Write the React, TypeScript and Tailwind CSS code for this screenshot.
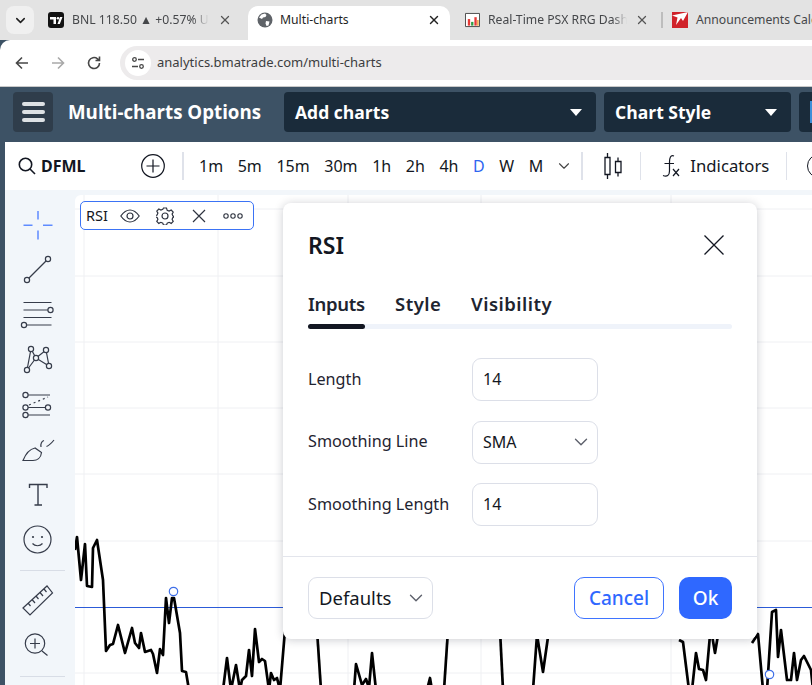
import { ChevronDown, X } from 'lucide-react';

const uiFont = "font-['Noto_Sans',sans-serif]";

const intervals = ['1m', '5m', '15m', '30m', '1h', '2h', '4h', 'D', 'W', 'M'];

// chart pieces that stay visible around the dialog, in page coordinates
const rsiLines = [
  '75,550 77,537 81,580 85,544 87,586 92,587 93,548 97,540 103,580 106,651 110,645 113,644 118,625 125,653 132,628 135,643 139,648 141,633 145,652 151,650 153,654 157,673 160,649 163,655 166,598 169,623 172,598 174,598 180,633 182,671 186,672 189,690',
  '223,690 227,658 231,690 236,665 240,690 242,680 246,676 249,650 252,676 255,629 259,662 262,659 265,661 269,690 271,673 274,680 277,678 280,690 285,630',
  '317,630 321,690',
  '354,690 356,664 362,685 366,679 369,688 372,653 376,690',
  '427,690 430,678 432,690',
  '444,690 448,630',
  '500,630 503,690',
  '533,690 537,635 543,672 549,630',
  '679,640 683,642 689,690',
  '692,690 696,653 699,669 703,670 706,680 710,635',
  '712,635 715,653 718,635',
  '752,643 758,634 763,690',
  '767,690 772,612 776,610 778,657 781,630 787,680 791,680 794,653 797,680 801,660 804,656 811,670 813,690',
];

const gridX = [84, 218, 348, 481, 671];
const gridY = [209, 276, 342, 408, 474, 541, 673];

const ink = 'fill-none stroke-[#363c4a] stroke-[1.2]';

const Dot = ({ x, y }: { x: number; y: number }) => (
  <circle cx={x} cy={y} r="2.6" className="fill-[#f2f6fa] stroke-[#363c4a] stroke-[1.2]" />
);

const Tool = ({ y, children }: { y: number; children: React.ReactNode }) => (
  <svg viewBox={`16 ${y} 44 45`} className="w-[44px] h-[45px] shrink-0">
    {children}
  </svg>
);

const Sidebar = () => (
  <div className="w-[70px] shrink-0 bg-[#f2f6fa] pl-[11px] pt-[13px] flex flex-col">
    <Tool y={203}>
      <path d="M38 211v8.500M38 230.500v9M23.500 225.200h9M43 225.200h9.500" className="fill-none stroke-[#5f8bff] stroke-[1.5]" />
    </Tool>
    <Tool y={248}>
      <path d="M27 280 48 259" className={ink} />
      <Dot x={27} y={280} />
      <Dot x={48} y={259} />
    </Tool>
    <Tool y={293}>
      <path d="M23.500 302.500h28M23.500 310h25M23.500 317.500h28M27 325h24.500" className={ink} />
      <Dot x={50.500} y={310} />
      <Dot x={24} y={325} />
    </Tool>
    <Tool y={338}>
      <path d="M27 370 31 349 36 358 46 350 49 366 36 358 27 370" className={ink} />
      <Dot x={31} y={349} />
      <Dot x={46} y={350} />
      <Dot x={27} y={370} />
      <Dot x={49} y={366} />
      <Dot x={36} y={358} />
    </Tool>
    <Tool y={383}>
      <path d="M28 395h22M28 407.500h18M28 415h22" className={ink} />
      <path d="M29 405 48 397" className={`${ink} [stroke-dasharray:2_3]`} />
      <Dot x={25.500} y={395} />
      <Dot x={25.500} y={407.500} />
      <Dot x={48} y={407.500} />
      <Dot x={25.500} y={415} />
    </Tool>
    <Tool y={428}>
      <path d="M23 460.500C26 453 30 449 35 448L41.500 452.500C41 458 37 460.500 33 460.500Z" className={ink} />
      <path d="M41 447C40.500 444 41.500 441.500 44 440.500M46.500 446.500C49 445.500 52 442.500 54 440" className={ink} />
    </Tool>
    <Tool y={473}>
      <path d="M29.500 488v-3.500h17.500v3.500M38 484.500v20M34.500 505h7.500" className="fill-none stroke-[#363c4a] stroke-[1.4]" />
    </Tool>
    <Tool y={518}>
      <circle cx="37.500" cy="539.500" r="13.500" className={ink} />
      <circle cx="33" cy="537" r="1.100" className="fill-[#363c4a]" />
      <circle cx="42" cy="537" r="1.100" className="fill-[#363c4a]" />
      <path d="M32.500 543.500c2.500 3 7.500 3 10 0" className={ink} />
    </Tool>
    <div className="w-[45px] h-px bg-[#d8dde6] ml-[4px] mt-[7px] mb-[6px]" />
    <Tool y={577}>
      <path d="M23 608 47 586 52.500 593 30 615Z M28 603l2.500 3M32 599.500l3 3.500M36 596l2.500 3M40 592.500l3 3.500M44 589l2.500 3" className={ink} />
    </Tool>
    <Tool y={622}>
      <circle cx="35" cy="643.500" r="9.700" className={ink} />
      <path d="M30 643.500h10M35 638.500v10M42 651l5.500 4.500" className={ink} />
    </Tool>
    <div className="w-[45px] h-px bg-[#d8dde6] ml-[4px] mt-[9px]" />
  </div>
);

const ChartLayer = () => (
  <svg viewBox="75 195 737 490" className="absolute inset-0 w-[737px] h-[490px]">
    {gridX.map((x) => (
      <path key={x} d={`M${x} 195V685`} className="stroke-[#eff0f3] stroke-1" />
    ))}
    {gridY.map((y) => (
      <path key={y} d={`M75 ${y}H812`} className="stroke-[#eff0f3] stroke-1" />
    ))}
    <path d="M75 607.500H812" className="stroke-[#2c5bd8] stroke-1" />
    {rsiLines.map((p) => (
      <polyline key={p} points={p} className="fill-none stroke-black stroke-[2.7] [stroke-linejoin:round]" />
    ))}
    <circle cx="173.500" cy="591.500" r="4.200" className="fill-white stroke-[#3f6fe8] stroke-[1.2]" />
    <circle cx="769.500" cy="674.500" r="4.200" className="fill-white stroke-[#3f6fe8] stroke-[1.2]" />
  </svg>
);

const StudyLegend = () => (
  <div className="absolute left-[5px] top-[6px] w-[174px] h-[29px] bg-white border-[1.5px] border-[#3b73f5] rounded-[5px] flex items-center pl-[5px] text-[14.500px] text-[#131722]">
    <span className="w-[29px]">RSI</span>
    <svg viewBox="0 0 20 14" className="w-[20px] h-[14px] ml-[5px] fill-none stroke-[#2f3440] stroke-[1.2]">
      <path d="M.8 7C4 2.500 7 1 10 1s6 1.500 9.200 6C16 11.500 13 13 10 13S4 11.500.8 7Z" />
      <circle cx="10" cy="7" r="3" />
    </svg>
    <svg viewBox="0 0 18 18" className="w-[18px] h-[18px] ml-[16px] fill-none stroke-[#2f3440] stroke-[1.2]">
      <path d="M7.500 1h3l.7 2.300 1.900.8 2.100-1.100 2 2-1.100 2.100.8 1.900 0 0 2 .7v0l-2 .7-.8 1.900 1.100 2.100-2 2-2.100-1.100-1.900.8-.7 2h-3l-.7-2-1.900-.8-2.100 1.100-2-2 1.100-2.100-.8-1.900-2-.7v-1l2-.7.8-1.900-1.100-2.100 2-2 2.100 1.100 1.900-.8Z" />
      <circle cx="9" cy="9" r="3" />
    </svg>
    <svg viewBox="0 0 14 14" className="w-[14px] h-[14px] ml-[18px] fill-none stroke-[#2f3440] stroke-[1.2]">
      <path d="M1 1l12 12M13 1 1 13" />
    </svg>
    <svg viewBox="0 0 20 6" className="w-[20px] h-[6px] ml-[17px] fill-none stroke-[#2f3440] stroke-[1.1]">
      <circle cx="3" cy="3" r="2.200" />
      <circle cx="10" cy="3" r="2.200" />
      <circle cx="17" cy="3" r="2.200" />
    </svg>
  </div>
);

const Field = ({ label, value, select }: { label: string; value: string; select?: boolean }) => (
  <div className="flex items-center h-[43px]">
    <span className="w-[164px] text-[16.200px] text-[#1f2430] pb-[1px]">{label}</span>
    <div className="w-[126px] h-[43px] border border-[#dcdfe8] rounded-[9px] flex items-center justify-between pl-[10px] pr-[5px] pb-[1px] text-[16px] text-[#131722]">
      {value}
      {select && <ChevronDown size={22} strokeWidth={1.5} className="text-[#5d606b]" />}
    </div>
  </div>
);

const RsiDialog = () => (
  <div className="absolute left-[208px] top-[8px] w-[474px] h-[436px] bg-white rounded-[8px] shadow-[0_1px_10px_rgba(20,25,40,0.22)] flex flex-col text-[#131722]">
    <div className="h-[86px] px-[25px] pb-[2px] flex items-center justify-between">
      <h2 className="text-[23px] font-semibold">RSI</h2>
      <svg viewBox="0 0 20 20" className="w-[20px] h-[20px] mr-[8px] fill-none stroke-[#131722] stroke-[1.3]">
        <path d="M.5.5l19 19M19.500.5l-19 19" />
      </svg>
    </div>
    <div className="h-[35px] px-[25px] flex items-start gap-[30px] text-[18.500px] font-semibold text-[#20242f] leading-[30px]">
      <span className="w-[57px] tracking-[-0.3px]">Inputs</span>
      <span className="w-[46px] tracking-[0.5px]">Style</span>
      <span className="tracking-[0.5px]">Visibility</span>
    </div>
    <div className="mx-[25px] h-[5px] rounded-full bg-[#eff3fa]">
      <div className="w-[57px] h-[5px] rounded-full bg-[#131722]" />
    </div>
    <div className="px-[25px] mt-[29px] flex flex-col gap-[19.500px]">
      <Field label="Length" value="14" />
      <Field label="Smoothing Line" value="SMA" select />
      <Field label="Smoothing Length" value="14" />
    </div>
    <div className="mt-[30px] border-t border-[#e3e5ec] pt-[20px] px-[25px] flex items-center justify-between">
      <div className="w-[125px] h-[42px] border border-[#dcdfe8] rounded-[9px] flex items-center justify-between pl-[10px] pr-[5px] text-[18.500px]">
        Defaults
        <ChevronDown size={22} strokeWidth={1.5} className="text-[#5d606b]" />
      </div>
      <div className="flex gap-[15px] text-[19px] font-medium">
        <button className="w-[90px] h-[42px] border border-[#3f74ff] rounded-[10px] text-[#2f68ff]">Cancel</button>
        <button className="w-[53px] h-[42px] rounded-[10px] bg-[#2f68ff] text-white">Ok</button>
      </div>
    </div>
  </div>
);

const BrowserTabs = () => (
  <div className="h-[40px] bg-[#e3e3e3] flex pl-[6px] pt-[6px] text-[12.200px] text-[#45474a] overflow-hidden">
    <div className="w-[28px] h-[28px] shrink-0 rounded-[8px] bg-[#f0f0f0] flex items-center justify-center text-[#1f1f1f]">
      <ChevronDown size={15} strokeWidth={2.4} />
    </div>
    <div className="w-[214px] h-[28px] shrink-0 flex items-center pl-[14px]">
      <svg viewBox="0 0 16 16" className="w-[16px] h-[16px] shrink-0">
        <rect width="16" height="16" rx="3" className="fill-[#131313]" />
        <path d="M2 5h6v7H5.500V7.500H2Z M9.500 12l2.500-7h2.500l-2.700 7Z" className="fill-white" />
        <circle cx="10" cy="6.300" r="1.300" className="fill-white" />
      </svg>
      <span className="w-[137px] shrink-0 ml-[8px] pt-[1px] whitespace-nowrap [mask-image:linear-gradient(to_right,black_88%,transparent)]">BNL 118.50 ▲ +0.57% Um</span>
      <X size={14} strokeWidth={2.2} className="ml-[9px] shrink-0 text-[#555]" />
    </div>
    <div className="w-[202px] h-[34px] shrink-0 bg-white rounded-t-[10px] flex items-center pl-[9px] pb-[6px] text-[#1f1f1f]">
      <svg viewBox="0 0 16 16" className="w-[16px] h-[16px] shrink-0">
        <circle cx="8" cy="8" r="7.500" className="fill-[#5f6368]" />
        <path d="M4.500 2.500 8 1.500l1.500 1.500-1 2-2.500.5-1 1.500L2 5.500ZM9 9l3.500.5-1 4-2 .5-1-2.500Z" className="fill-white" />
      </svg>
      <span className="ml-[7px] pt-[1px]">Multi-charts</span>
      <X size={14} strokeWidth={2.4} className="ml-auto mr-[9px] text-[#222]" />
    </div>
    <div className="w-[211px] h-[28px] shrink-0 flex items-center pl-[15px]">
      <svg viewBox="0 0 16 16" className="w-[15px] h-[16px] shrink-0">
        <path d="M.5 1h15v14H.5Z" className="fill-white stroke-[#444] stroke-1" />
        <path d="M3 7h2.500v7H3Z" className="fill-[#e53935]" />
        <path d="M6.500 10H9v4H6.500Z" className="fill-[#2e9e44]" />
        <path d="M10 5h2.500v9H10Z" className="fill-[#e53935]" />
        <path d="M13 8h1.500v6H13Z" className="fill-[#f29a2e]" />
      </svg>
      <span className="w-[139px] shrink-0 ml-[8px] pt-[1px] whitespace-nowrap [mask-image:linear-gradient(to_right,black_90%,transparent)]">Real-Time PSX RRG Dashb</span>
      <X size={14} strokeWidth={2.2} className="ml-[8px] shrink-0 text-[#555]" />
    </div>
    <div className="h-[28px] shrink-0 flex items-center">
      <div className="w-[2px] h-[16px] bg-[#bdbdbd] shrink-0" />
      <svg viewBox="0 0 16 16" className="w-[16px] h-[16px] ml-[9px] shrink-0">
        <rect width="16" height="16" className="fill-[#d0222a]" />
        <path d="M0 3.500 16 0l-5 9-2-3-5 7 1.500-7.500Z" className="fill-white" />
      </svg>
      <span className="ml-[8px] pt-[1px] whitespace-nowrap">Announcements Calen</span>
    </div>
  </div>
);

const AddressBar = () => (
  <div className="h-[47px] bg-white border-b border-[#c9c9c9] rounded-tl-[10px] flex items-center pb-[1px] relative">
    <svg viewBox="0 0 16 16" className="w-[16px] h-[16px] ml-[14px] fill-none stroke-[#474747] stroke-[1.6]">
      <path d="M14 8H2.500M8 2.500 2.500 8 8 13.500" />
    </svg>
    <svg viewBox="0 0 16 16" className="w-[16px] h-[16px] ml-[20px] fill-none stroke-[#a9a9a9] stroke-[1.6]">
      <path d="M2 8h11.500M8 2.500 13.500 8 8 13.500" />
    </svg>
    <svg viewBox="0 0 16 16" className="w-[16px] h-[16px] ml-[20px] fill-none stroke-[#474747] stroke-[1.6]">
      <path d="M13.500 8A5.500 5.500 0 1 1 11.500 3.800L13.500 5.500M13.500 1.500v4h-4" />
    </svg>
    <div className="ml-[18px] flex-1 h-[34px] rounded-l-full bg-[#edebec] flex items-center pl-[5px]">
      <div className="w-[26px] h-[26px] rounded-full bg-white flex items-center justify-center">
        <svg viewBox="0 0 14 14" className="w-[14px] h-[14px] fill-none stroke-[#474747] stroke-[1.3]">
          <circle cx="3.500" cy="3.500" r="1.800" />
          <circle cx="10.500" cy="10.500" r="1.800" />
          <path d="M7 3.500h6M1 10.500h6" />
        </svg>
      </div>
      <span className="ml-[6px] pt-[1px] text-[13px] text-[#3c3d40]">analytics.bmatrade.com/multi-charts</span>
    </div>
  </div>
);

const AppHeader = () => (
  <div className="h-[55px] bg-[#3d5265] flex items-start pt-[5px] pl-[13px] font-['Open_Sans',sans-serif] font-bold text-white">
    <div className="w-[40px] h-[40px] shrink-0 rounded-[4px] bg-[#2f3d4b] flex flex-col items-center justify-center gap-[4px]">
      <span className="w-[23px] h-[4px] rounded-full bg-[#dde1e4]" />
      <span className="w-[23px] h-[4px] rounded-full bg-[#dde1e4]" />
      <span className="w-[23px] h-[4px] rounded-full bg-[#dde1e4]" />
    </div>
    <span className="w-[231px] shrink-0 pl-[15px] text-[18.700px] leading-[40px] whitespace-nowrap">Multi-charts Options</span>
    <div className="w-[312px] h-[40px] shrink-0 rounded-[4px] bg-[#1a2b3a] flex items-center justify-between pl-[11px] pr-[14px] text-[17.500px]">
      Add charts
      <span className="w-0 h-0 border-x-[6px] border-x-transparent border-t-[7px] border-t-white" />
    </div>
    <div className="w-[187px] h-[40px] shrink-0 ml-[8px] rounded-[4px] bg-[#1a2b3a] flex items-center justify-between pl-[11px] pr-[14px] text-[17.500px]">
      Chart Style
      <span className="w-0 h-0 border-x-[6px] border-x-transparent border-t-[7px] border-t-white" />
    </div>
    <div className="flex-1 h-[40px] ml-[8px] rounded-l-[4px] bg-[#1a2b3a] overflow-hidden pt-[9px] pl-[11px]">
      <span className="block w-[2px] h-[22px] bg-[#3d8fd8]" />
    </div>
  </div>
);

const TopToolbar = () => (
  <div className="h-[48px] flex items-center bg-white pl-[13px] text-[#131722] overflow-hidden">
    <svg viewBox="0 0 18 18" className="w-[18px] h-[18px] shrink-0 fill-none stroke-[#131722] stroke-[1.6]">
      <circle cx="7.500" cy="7.500" r="6.200" />
      <path d="M12 12l5 5" />
    </svg>
    <span className="w-[100px] shrink-0 ml-[5px] text-[16px] font-bold">DFML</span>
    <svg viewBox="0 0 24 24" className="w-[24px] h-[24px] shrink-0 fill-none stroke-[#131722] stroke-[1.2]">
      <circle cx="12" cy="12" r="11.300" />
      <path d="M12 5.500v13M5.500 12h13" />
    </svg>
    <div className="w-[2px] h-[28px] bg-[#dfe2ea] ml-[17px] shrink-0" />
    <div className="flex items-center gap-[14.600px] ml-[15px] text-[16px] shrink-0">
      {intervals.map((t) => (
        <span key={t} className={t === 'D' ? 'text-[#2f66f0]' : ''}>
          {t}
        </span>
      ))}
    </div>
    <ChevronDown size={18} strokeWidth={1.5} className="ml-[12px] shrink-0 text-[#444]" />
    <div className="w-[2px] h-[28px] bg-[#dfe2ea] ml-[8px] shrink-0" />
    <svg viewBox="0 0 18 26" className="w-[18px] h-[26px] ml-[21px] shrink-0 fill-none stroke-[#131722] stroke-[1.3]">
      <path d="M1 4.500h5v17H1ZM3.500 0v4.500M3.500 21.500V26M11.500 8.500h5.500v11h-5.500ZM14 4.500v4M14 19.500v4" />
    </svg>
    <div className="w-px h-[28px] bg-[#dfe2ea] ml-[18px] shrink-0" />
    <svg viewBox="0 0 18 22" className="w-[18px] h-[22px] ml-[21px] shrink-0 fill-none stroke-[#131722] stroke-[1.2]">
      <path d="M12 1C8.500 -.5 7.500 3 7.500 7V16C7.500 20.500 5 22 1 20.500M2.500 8.500h9.500M11 14l6 7M17 14l-6 7" />
    </svg>
    <span className="ml-[10px] text-[16.700px] shrink-0">Indicators</span>
    <div className="w-px h-[28px] bg-[#dfe2ea] ml-[17px] shrink-0" />
    <span className="w-[24px] h-[24px] rounded-full border border-[#131722] ml-[20px] shrink-0" />
  </div>
);

const App = () => {
  return (
    <div className={`w-[812px] h-[685px] overflow-hidden flex flex-col bg-[#3d5265] ${uiFont}`}>
      <BrowserTabs />
      <AddressBar />
      <AppHeader />
      <div className="flex-1 ml-[5px] flex flex-col min-h-0">
        <TopToolbar />
        <div className="flex-1 flex bg-[#f2f6fa] min-h-0">
          <Sidebar />
          <div className="flex-1 mt-[5px] relative bg-white rounded-tl-[6px] overflow-hidden">
            <ChartLayer />
            <StudyLegend />
            <RsiDialog />
          </div>
        </div>
      </div>
    </div>
  );
};

export default App;
